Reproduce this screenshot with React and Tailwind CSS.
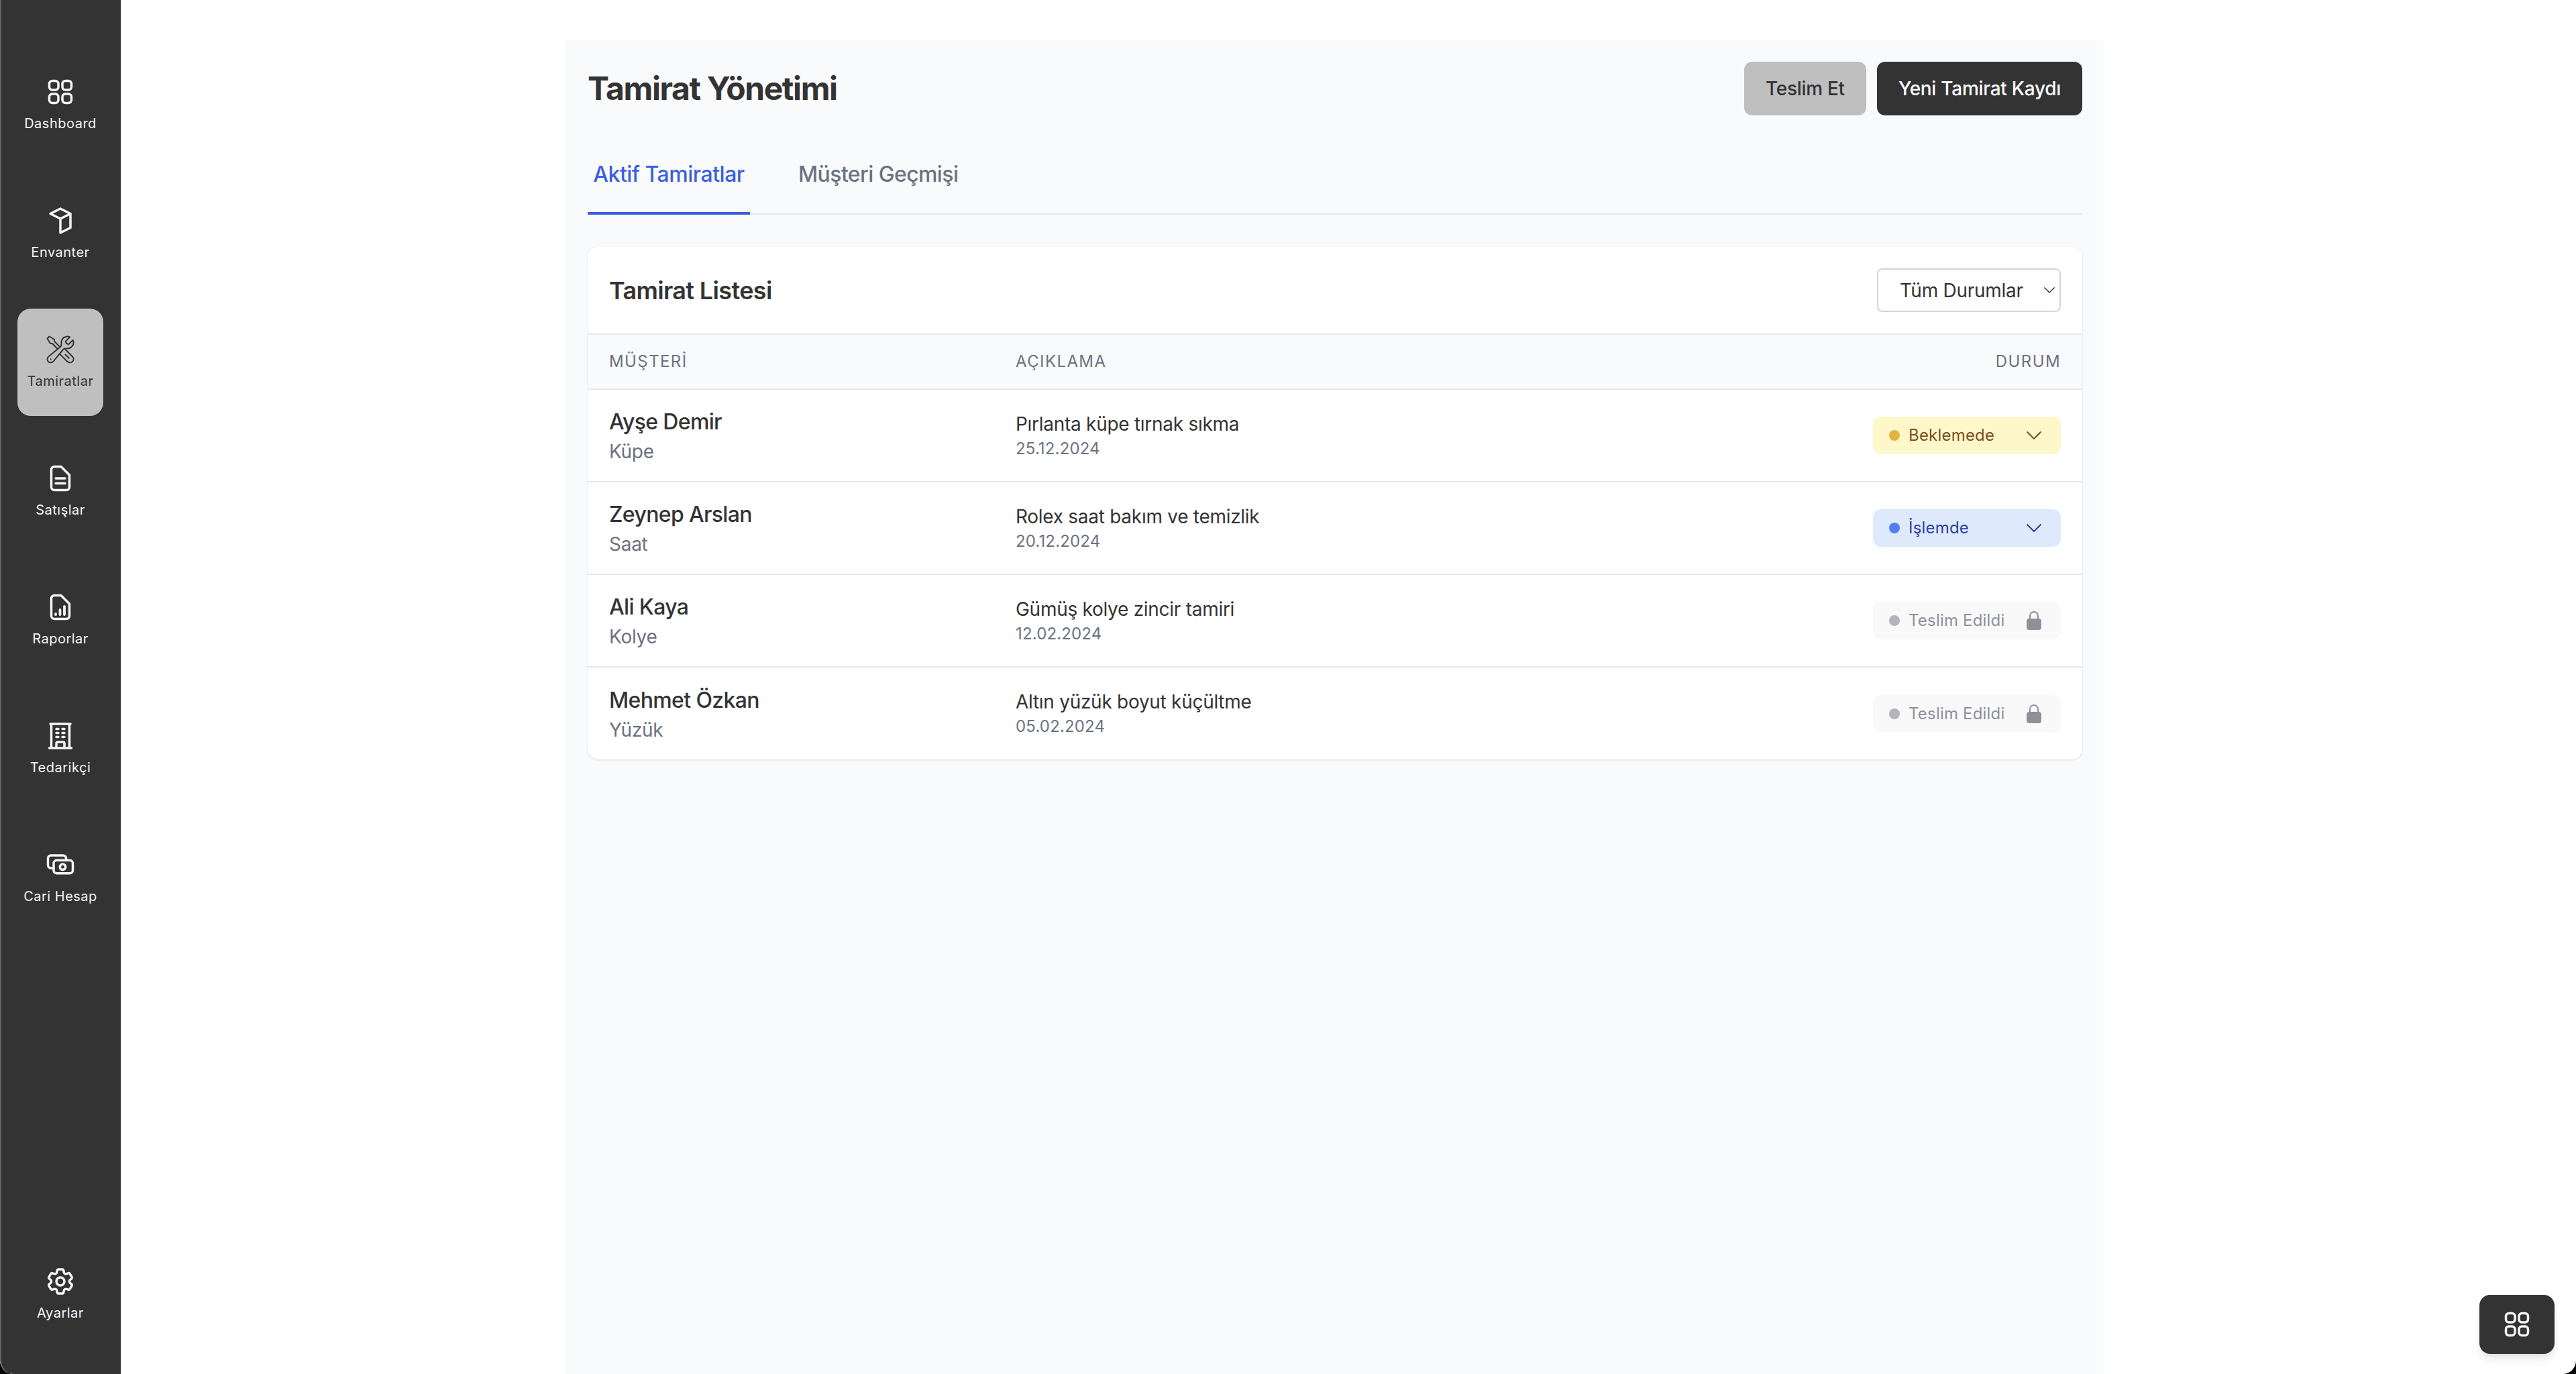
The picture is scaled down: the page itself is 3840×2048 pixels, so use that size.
import {
  HiOutlineSquares2X2,
  HiOutlineWrenchScrewdriver,
  HiOutlineBuildingOffice,
  HiOutlineCog6Tooth,
  HiOutlineChevronDown,
  HiLockClosed,
} from "react-icons/hi2";

const Svg = ({ children }) => (
  <svg
    viewBox="0 0 24 24"
    fill="none"
    stroke="currentColor"
    strokeWidth="1.75"
    strokeLinecap="round"
    strokeLinejoin="round"
    className="w-12 h-12 translate-y-[1px]"
  >
    {children}
  </svg>
);

const BoxIcon = () => (
  <Svg>
    <path d="M4.5 6.25 12 2.5l7.5 3.75L12 10zM12 10v10.5l7.5-3.75V6.25" />
  </Svg>
);

const docPath =
  "M7.5 2.75h5l6.25 6.25v9a2.25 2.25 0 0 1-2.25 2.25h-9A2.25 2.25 0 0 1 5.25 18V5A2.25 2.25 0 0 1 7.5 2.75z";

const DocIcon = () => (
  <Svg>
    <path d={docPath} />
    <path d="M8.5 11.5h7M8.5 15.25h7" />
  </Svg>
);

const ReportIcon = () => (
  <Svg>
    <path d={docPath} />
    <path d="M8.5 16.5v.5M11.75 13.5V17M15 11v6" strokeWidth="1.9" />
  </Svg>
);

const CashIcon = () => (
  <Svg>
    <path d="M7 14H5a2.25 2.25 0 0 1-2.25-2.25v-5A2.25 2.25 0 0 1 5 4.5h9a2.25 2.25 0 0 1 2.25 2.25v1.4" />
    <rect x="7" y="8.15" width="14.25" height="9.75" rx="2.25" />
    <circle cx="13.75" cy="13.1" r="2.1" />
  </Svg>
);

const icon = "w-12 h-12";

const navItems = [
  { label: "Dashboard", icon: <HiOutlineSquares2X2 className={icon} strokeWidth={1.75} /> },
  { label: "Envanter", icon: <BoxIcon /> },
  { label: "Tamiratlar", icon: <HiOutlineWrenchScrewdriver className={icon} strokeWidth={1} />, active: true },
  { label: "Satışlar", icon: <DocIcon /> },
  { label: "Raporlar", icon: <ReportIcon /> },
  { label: "Tedarikçi", icon: <HiOutlineBuildingOffice className={icon} strokeWidth={1.75} /> },
  { label: "Cari Hesap", icon: <CashIcon /> },
];

const NavItem = ({ item }) => (
  <div
    className={
      item.active
        ? "w-[128px] h-[160px] rounded-[20px] flex flex-col items-center justify-center gap-2 bg-[#bfbfbf] text-[#333333]"
        : "w-[128px] h-[160px] rounded-[20px] flex flex-col items-center justify-center gap-2 text-[#f5f5f5]"
    }
  >
    {item.icon}
    <span className="text-[20px] leading-[30px] tracking-[0.5px]">{item.label}</span>
  </div>
);

const statusStyles = {
  wait: "bg-[#fef7c9] text-[#7d4f1f]",
  work: "bg-[#dfe9fc] text-[#2a3fa3]",
  done: "bg-[#f9f9f9] text-[#8e9099]",
};

const StatusBadge = ({ type, text }) => (
  <div className={`w-[280px] h-[56px] rounded-[12px] pl-6 pr-6 flex items-center ${statusStyles[type]}`}>
    {type === "wait" && <span className="w-4 h-4 rounded-full bg-[#e3b341]" />}
    {type === "work" && <span className="w-4 h-4 rounded-full bg-[#5080f0]" />}
    {type === "done" && <span className="w-4 h-4 rounded-full bg-[#b3b5bc]" />}
    <span className="ml-[13px] text-[24px] tracking-[0.2px] flex-1">{text}</span>
    {type === "done" ? (
      <HiLockClosed className="w-8 h-8 text-[#8f9199]" />
    ) : (
      <HiOutlineChevronDown className="w-8 h-8" />
    )}
  </div>
);

const rows = [
  { name: "Ayşe Demir", item: "Küpe", desc: "Pırlanta küpe tırnak sıkma", date: "25.12.2024", type: "wait", status: "Beklemede" },
  { name: "Zeynep Arslan", item: "Saat", desc: "Rolex saat bakım ve temizlik", date: "20.12.2024", type: "work", status: "İşlemde" },
  { name: "Ali Kaya", item: "Kolye", desc: "Gümüş kolye zincir tamiri", date: "12.02.2024", type: "done", status: "Teslim Edildi" },
  { name: "Mehmet Özkan", item: "Yüzük", desc: "Altın yüzük boyut küçültme", date: "05.02.2024", type: "done", status: "Teslim Edildi" },
];

export default function App() {
  return (
    <div className="h-[2048px] bg-black font-['Inter',sans-serif] text-[#333333]">
      <div className="relative h-full flex bg-white rounded-b-[20px] overflow-hidden">
        <aside className="w-[180px] shrink-0 bg-[#333333] border-l-2 border-[#666666] rounded-bl-[20px] flex flex-col items-center pt-[76px] pb-[39px] pr-[2px]">
          <div className="flex flex-col gap-8">
            {navItems.map((item) => (
              <NavItem key={item.label} item={item} />
            ))}
          </div>
          <div className="mt-auto">
            <NavItem item={{ label: "Ayarlar", icon: <HiOutlineCog6Tooth className={icon} strokeWidth={1.75} /> }} />
          </div>
        </aside>

        <main className="flex-1 flex justify-center pt-[60px] pr-[40px]">
          <div className="w-[2292px] bg-[#f9fafb] p-8">
            <div className="flex items-center justify-between">
              <h1 className="text-[48px] font-bold tracking-[-1.4px]">Tamirat Yönetimi</h1>
              <div className="flex gap-4">
                <button className="h-20 px-8 rounded-[12px] bg-[#bfbfbf] text-[28px] font-medium tracking-[-0.28px]">Teslim Et</button>
                <button className="h-20 px-8 rounded-[12px] bg-[#333333] text-white text-[28px] font-medium tracking-[-0.28px]">
                  Yeni Tamirat Kaydı
                </button>
              </div>
            </div>

            <div className="mt-[60px] flex gap-16 border-b-2 border-[#e5e7eb] h-[88px]">
              <div className="w-[242px] h-[88px] border-b-4 border-[#3b5fe0] text-[#3b5fe0] text-[32px] font-medium tracking-[-0.5px] text-center leading-[56px]">
                Aktif Tamiratlar
              </div>
              <div className="px-2 text-[#6b7280] text-[32px] font-medium tracking-[-0.6px] leading-[56px]">Müşteri Geçmişi</div>
            </div>

            <div className="mt-[48px] bg-white rounded-[16px] shadow-sm overflow-hidden">
              <div className="h-[131px] px-8 flex items-center justify-between border-b-2 border-[#e5e7eb]">
                <h2 className="text-[36px] font-semibold tracking-[-0.65px]">Tamirat Listesi</h2>
                <div className="relative w-[274px] h-[65px]">
                  <select className="appearance-none w-full h-full pl-8 pr-2 rounded-[8px] border-2 border-[#d1d5db] bg-white text-[28px] tracking-[-0.28px]">
                    <option>Tüm Durumlar</option>
                  </select>
                  <svg
                    viewBox="0 0 20 12"
                    fill="none"
                    stroke="#333333"
                    strokeWidth="1.6"
                    className="absolute right-[8px] top-[27px] w-[18px] h-[11px] pointer-events-none"
                  >
                    <path d="M1.5 1.5 10 10l8.5-8.5" />
                  </svg>
                </div>
              </div>

              <div className="h-[82px] px-8 grid grid-cols-[606px_1fr_auto] items-center bg-[#f9fafb] border-b-2 border-[#e5e7eb] text-[24px] tracking-[1.4px] text-[#6b7280]">
                <span>MÜŞTERİ</span>
                <span>AÇIKLAMA</span>
                <span>DURUM</span>
              </div>

              {rows.map((row, i) => (
                <div
                  key={row.name}
                  className={
                    i < rows.length - 1
                      ? "h-[138px] px-8 grid grid-cols-[606px_1fr_auto] items-center border-b-2 border-[#e5e7eb]"
                      : "h-[137px] px-8 grid grid-cols-[606px_1fr_auto] items-center"
                  }
                >
                  <div className="flex flex-col">
                    <span className="text-[32px] leading-[48px] font-medium tracking-[-0.64px]">{row.name}</span>
                    <span className="text-[28px] leading-[40px] tracking-[-0.28px] text-[#6b7280]">{row.item}</span>
                  </div>
                  <div className="flex flex-col -mt-[1px]">
                    <span className="text-[28px] leading-[40px] tracking-[-0.28px]">{row.desc}</span>
                    <span className="text-[24px] leading-[34px] tracking-[0.15px] text-[#6b7280]">{row.date}</span>
                  </div>
                  <StatusBadge type={row.type} text={row.status} />
                </div>
              ))}
            </div>
          </div>
        </main>

        <button className="absolute right-8 bottom-[30px] w-[112px] h-[88px] rounded-[16px] bg-[#333333] text-[#f5f5f5] shadow-lg flex items-center justify-center">
          <HiOutlineSquares2X2 className={icon} strokeWidth={1.75} />
        </button>
      </div>
    </div>
  );
}
